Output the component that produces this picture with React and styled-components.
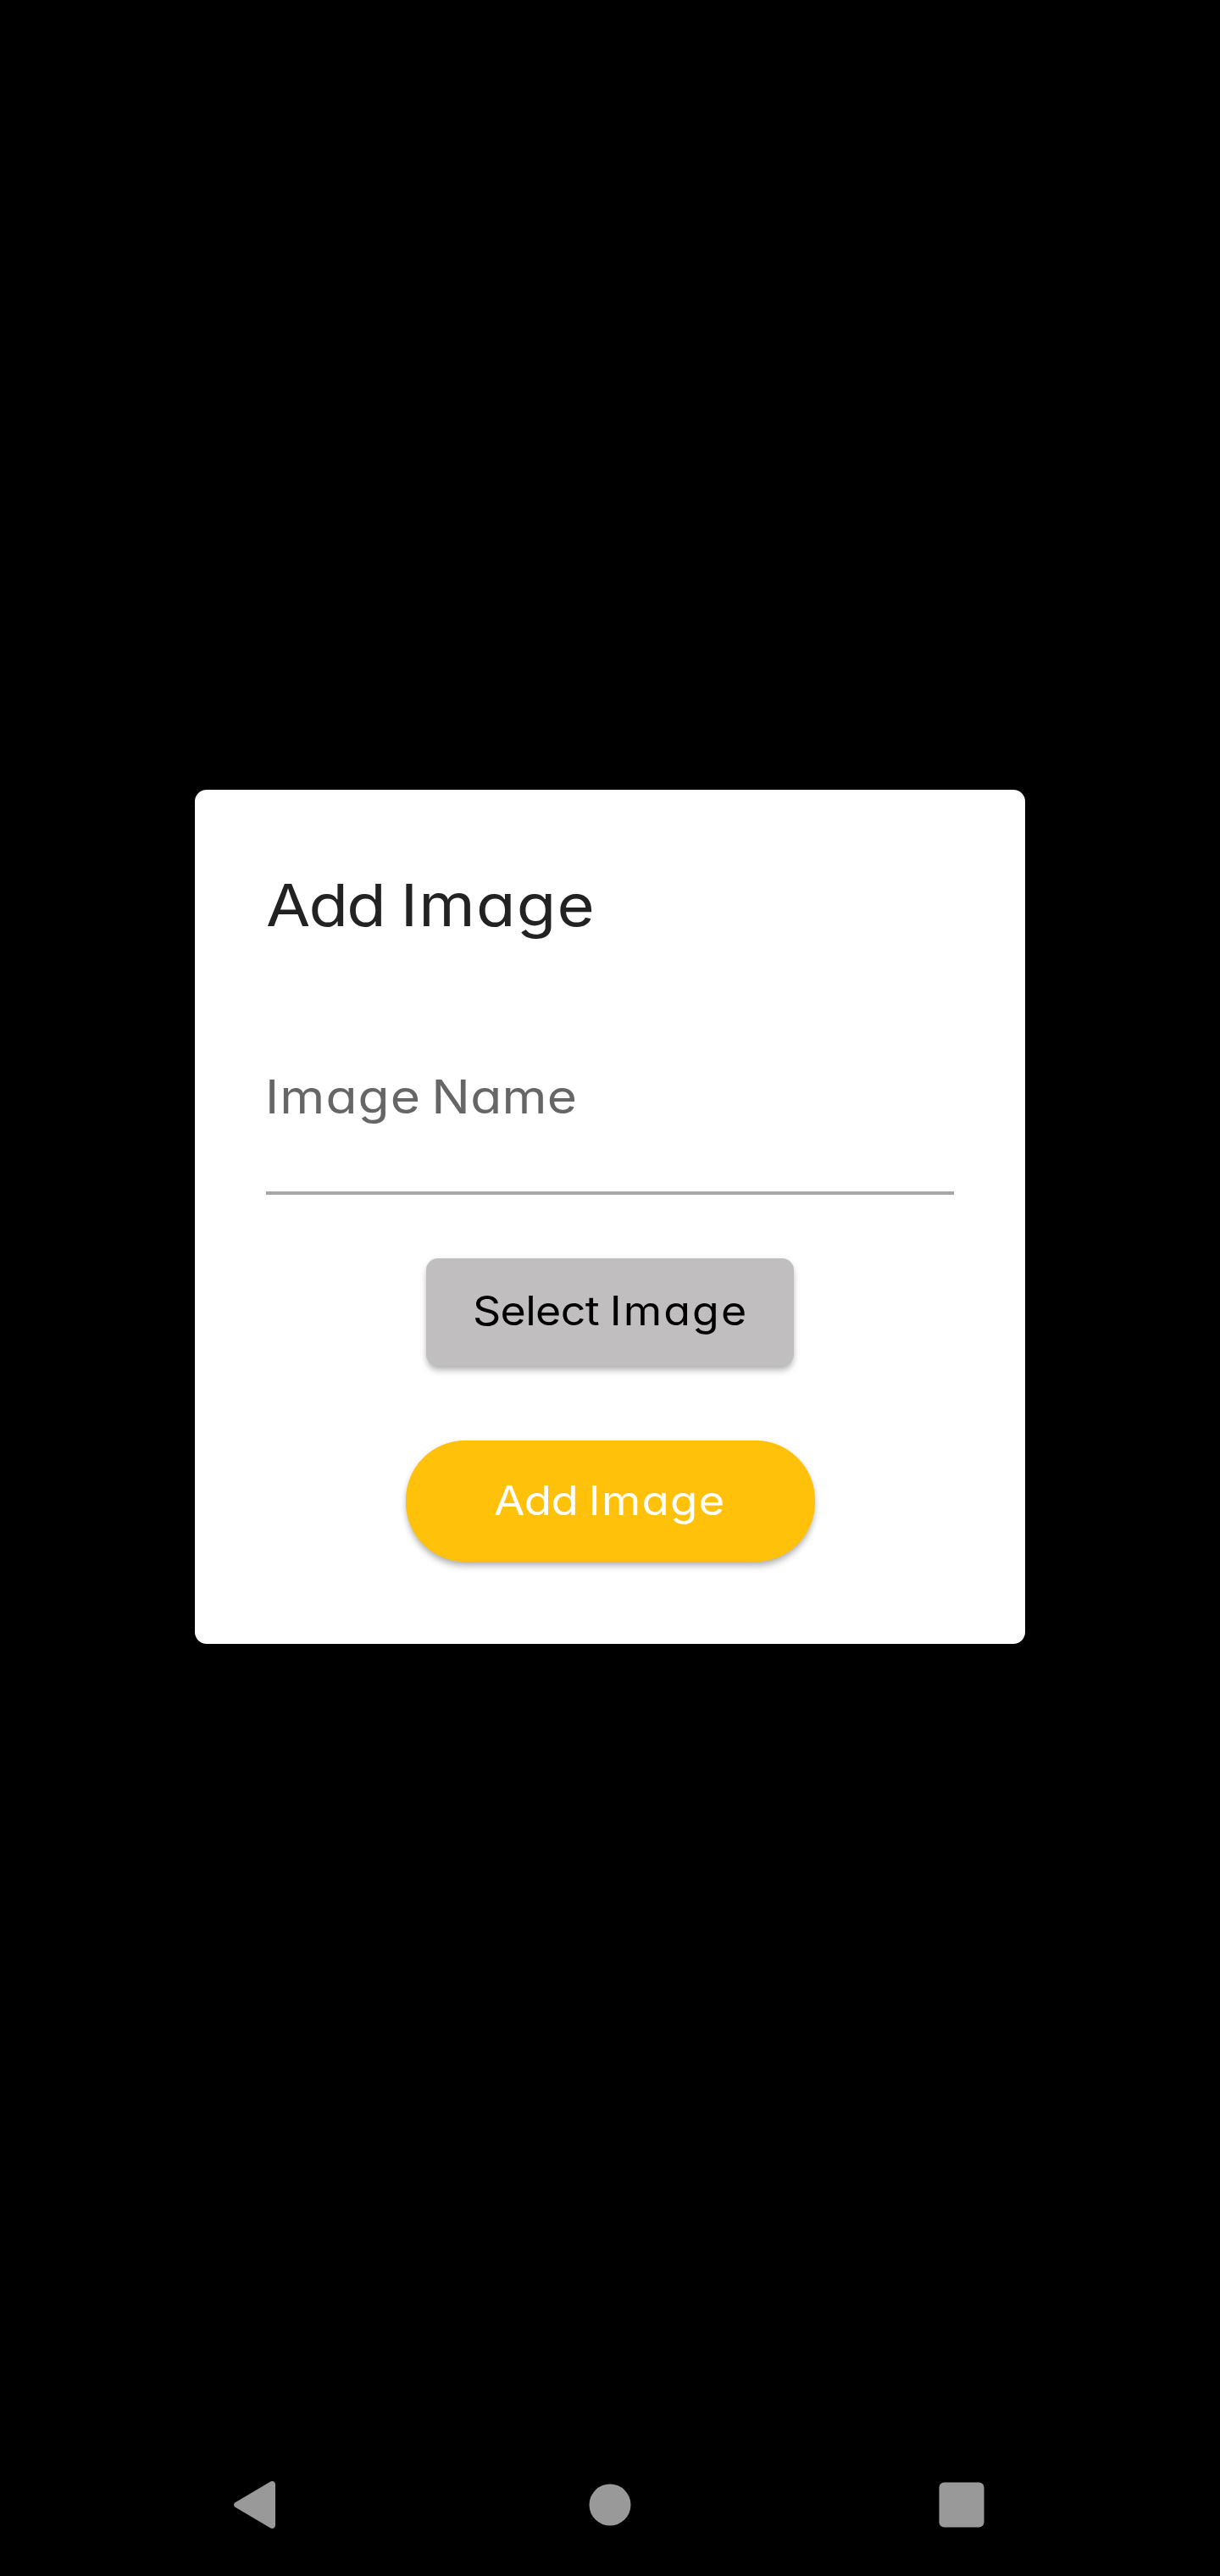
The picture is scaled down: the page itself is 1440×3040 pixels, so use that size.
import React from "react";
import styled, { createGlobalStyle } from "styled-components";

const GlobalStyle = createGlobalStyle`
  * { box-sizing: border-box; }
  body {
    margin: 0;
    background: #000;
    font-family: Inter, "Noto Sans", sans-serif;
    font-feature-settings: "cv11";
  }
`;

const Screen = styled.main`
  display: flex;
  flex-direction: column;
  align-items: center;
  width: 1440px;
  height: 3040px;
  padding-top: 932px;
  background: #000;
`;

const Dialog = styled.section`
  display: flex;
  flex-direction: column;
  align-items: center;
  width: 980px;
  height: 1008px;
  padding: 86px 84px 0;
  border-radius: 14px;
  background: #fff;
`;

const WideText = styled.span`
  display: inline-block;
  transform: scaleX(${(p) => p.$stretch});
  transform-origin: left center;
  word-spacing: ${(p) => p.$gap}px;
  white-space: nowrap;
`;

const Word = styled.span`
  letter-spacing: ${(p) => p.$spacing}px;
`;

const Title = styled.h1`
  align-self: stretch;
  margin: 0;
  font-size: 69px;
  font-weight: 400;
  line-height: 100px;
  color: #222;
`;

const Field = styled.div`
  align-self: stretch;
  height: 156px;
  margin-top: 136px;
  border-bottom: 4px solid #a6a6a6;
`;

const Label = styled.label`
  display: block;
  margin-left: -1px;
  font-size: 55px;
  font-weight: 400;
  line-height: 80px;
  color: #666;
`;

const Button = styled.button`
  display: block;
  flex: none;
  border: 0;
  font-family: inherit;
  font-feature-settings: inherit;
  font-size: 48px;
  font-weight: 400;
  text-align: left;
  white-space: nowrap;
  box-shadow: 0 7px 9px -2px rgba(0, 0, 0, 0.24), 0 2px 7px rgba(0, 0, 0, 0.13);
`;

const SelectButton = styled(Button)`
  width: 434px;
  height: 127px;
  margin-top: 75px;
  padding: 0 0 4px 55px;
  border-radius: 14px;
  background: #c0bebf;
  color: #000;
`;

const SubmitButton = styled(Button)`
  width: 483px;
  height: 143px;
  margin-top: 88px;
  padding: 0 0 3px 104px;
  border-radius: 70px;
  background: #ffc10a;
  color: #fff;
`;

const NavBar = styled.nav`
  display: flex;
  justify-content: space-between;
  align-items: center;
  width: 888px;
  height: 168px;
  margin-top: auto;
`;

const NavIcon = styled.svg`
  display: block;
  width: 60px;
  height: 60px;
  fill: #999;
`;

export default function App() {
  return (
    <>
      <GlobalStyle />
      <Screen>
        <Dialog>
          <Title>
            <WideText $stretch={1.1} $gap={-0.8}>
              <Word $spacing={-1.6}>Add </Word>
              <Word $spacing={1.1}>Image</Word>
            </WideText>
          </Title>
          <Field>
            <Label>
              <WideText $stretch={1.1} $gap={-5.4}>
                <Word $spacing={1}>Image </Word>
                <Word $spacing={0.2}>Name</Word>
              </WideText>
            </Label>
          </Field>
          <SelectButton>
            <WideText $stretch={1.08} $gap={-1}>
              <Word $spacing={-0.6}>Select </Word>
              <Word $spacing={1.9}>Image</Word>
            </WideText>
          </SelectButton>
          <SubmitButton>
            <WideText $stretch={1.1} $gap={-1.6}>
              <Word $spacing={-0.6}>Add </Word>
              <Word $spacing={1.1}>Image</Word>
            </WideText>
          </SubmitButton>
        </Dialog>
        <NavBar>
          <NavIcon viewBox="0 0 60 60">
            <path d="M1.6 27.2 L43 2.8 Q45.5 1.4 47.5 2.8 Q49 4 49 6 V54 Q49 56 47.5 57.2 Q45.5 58.6 43 57.2 L1.6 32.8 Q0 31.8 0 30 Q0 28.2 1.6 27.2Z" />
          </NavIcon>
          <NavIcon viewBox="0 0 60 60">
            <circle cx="30" cy="30" r="24.5" />
          </NavIcon>
          <NavIcon viewBox="0 0 60 60">
            <rect x="4.5" y="3.5" width="53" height="53" rx="6" />
          </NavIcon>
        </NavBar>
      </Screen>
    </>
  );
}
